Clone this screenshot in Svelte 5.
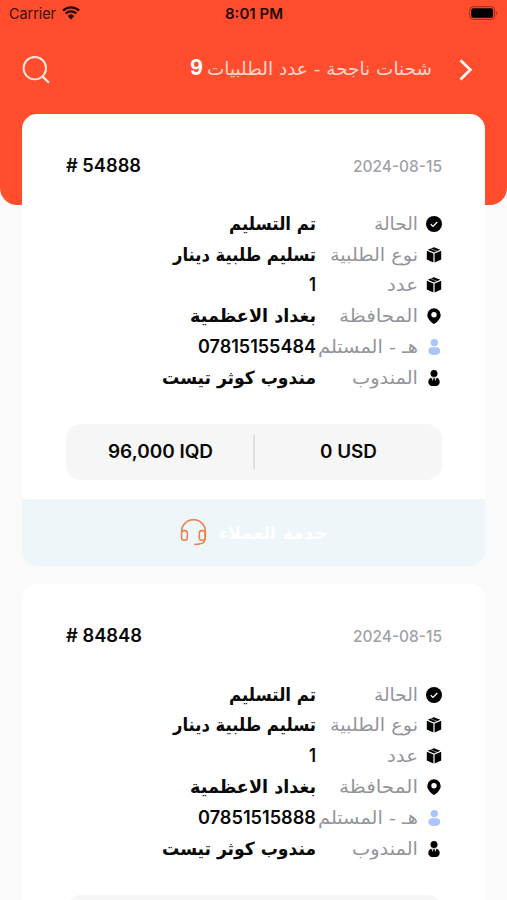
<script>
	const customerService = 'خدمة العملاء';

	// every text carries the width it takes up in the row
	const details = [
		{ icon: 'check', label: 'الحالة', labelWidth: 44 },
		{ icon: 'box', label: 'نوع الطلبية', labelWidth: 88 },
		{ icon: 'box', label: 'عدد', labelWidth: 31 },
		{ icon: 'pin', label: 'المحافظة', labelWidth: 79 },
		{ icon: 'user', label: 'هـ - المستلم', labelWidth: 100 },
		{ icon: 'agent', label: 'المندوب', labelWidth: 66 }
	];

	const orders = [
		{
			id: '54888',
			idWidth: 75,
			date: '2024-08-15',
			values: [
				['تم التسليم', 87],
				['تسليم طلبية دينار', 143],
				['1', 7],
				['بغداد الاعظمية', 126],
				['07815155484', 118],
				['مندوب كوثر تيست', 154]
			]
		},
		{
			id: '84848',
			idWidth: 76,
			date: '2024-08-15',
			values: [
				['تم التسليم', 87],
				['تسليم طلبية دينار', 143],
				['1', 7],
				['بغداد الاعظمية', 126],
				['07851515888', 118],
				['مندوب كوثر تيست', 154]
			]
		}
	];
</script>

{#snippet fit(text, width, kind)}
	<svg class="fit {kind}" {width} height="24">
		<text x={width / 2} y="17.5" text-anchor="middle" textLength={width} lengthAdjust="spacingAndGlyphs">{text}</text>
	</svg>
{/snippet}

{#snippet glyph(name)}
	<svg class="glyph" width="18" height="18" viewBox="0 0 18 18">
		{#if name === 'check'}
			<circle cx="9" cy="9" r="8" />
			<path d="M5.7 9.2l2.3 2.2 4.3-4.4" fill="none" stroke="#fff" stroke-width="1.3" />
		{:else if name === 'box'}
			<path d="M9 1.2l6.3 2.5L9 6.4 2.7 3.7z" />
			<path d="M1.8 4.8l6.6 2.7v9L1.8 13.6z" />
			<path d="M16.2 4.8L9.6 7.5v9l6.6-2.9z" />
			<path d="M5.6 2.6l6.7 2.8" fill="none" stroke="#fff" stroke-width="0.5" />
		{:else if name === 'pin'}
			<path
				fill-rule="evenodd"
				d="M9 1.2a6.7 6.7 0 0 0-6.7 6.7c0 3.7 3.3 6.7 6.7 9.1 3.4-2.4 6.7-5.4 6.7-9.1A6.7 6.7 0 0 0 9 1.2zm0 3.9a2.7 2.7 0 1 1 0 5.4 2.7 2.7 0 0 1 0-5.4z"
			/>
		{:else if name === 'user'}
			<g fill="#a9c5fb">
				<circle cx="9.3" cy="4.6" r="3.7" />
				<path d="M7 9.3h4.6c2.2 0 3.6 1.7 3.6 3.7 0 2.7-2.1 3.9-5.9 3.9s-5.9-1.2-5.9-3.9c0-2 1.4-3.7 3.6-3.7z" />
			</g>
		{:else}
			<circle cx="9" cy="4.5" r="3.5" />
			<path d="M7 8.8h4c2.3 0 3.7 1.7 3.7 4.2 0 2.4-1.6 3.9-3.7 3.9H7c-2.1 0-3.7-1.5-3.7-3.9 0-2.5 1.4-4.2 3.7-4.2z" />
			<path d="M6.2 8.8L9 14l2.8-5.2z" fill="#ddd" />
			<path d="M8.3 9.2h1.4l.6 4.5L9 15.4l-1.3-1.7z" />
		{/if}
	</svg>
{/snippet}

<div class="screen">
	<header>
		<div class="status">
			<div class="status__carrier">
				{@render fit('Carrier', 47, 'carrier')}
				<svg width="18" height="14" viewBox="0 0 18 14">
					<path d="M1 4.6a11.5 11.5 0 0 1 16 0M3.7 7.5a7.6 7.6 0 0 1 10.6 0" fill="none" stroke="#250700" stroke-width="2.3" />
					<path d="M5.7 9.9a4.8 4.8 0 0 1 6.6 0L9 13.4z" fill="#250700" />
				</svg>
			</div>
			{@render fit('8:01 PM', 58, 'clock')}
			<div class="status__battery">
				<svg width="30" height="14" viewBox="0 0 30 14">
					<rect x="0.7" y="0.7" width="25" height="12.6" rx="3.5" fill="none" stroke="#9c2e19" />
					<rect x="2.3" y="2.3" width="21.8" height="9.4" rx="2" />
					<path d="M27.2 4.9q2 2.1 0 4.2z" fill="#9c2e19" />
				</svg>
			</div>
		</div>
		<div class="bar">
			<svg width="28" height="28" viewBox="0 0 28 28" fill="none" stroke="#ffe9e2" stroke-width="1.9">
				<circle cx="12.8" cy="12.2" r="11.2" />
				<path d="M20.4 20.4l6.6 6.4" stroke-width="2.2" />
			</svg>
			<div class="bar__title">
				{@render fit('شحنات ناجحة - عدد الطلبيات', 225, 'title')}
				{@render fit('9', 13, 'count')}
			</div>
			<svg width="14" height="22" viewBox="0 0 14 22">
				<path d="M1.5 1.2L11.3 10.8 1.5 20.5" fill="none" stroke="#fff" stroke-width="2.7" />
			</svg>
		</div>
	</header>

	<main>
		{#each orders as order}
			<article class="card">
				<div class="card__body">
					<div class="card__top">
						{@render fit('# ' + order.id, order.idWidth, 'number')}
						{@render fit(order.date, 89, 'date')}
					</div>
					<div class="details">
						{#each details as detail, i}
							<div class="detail">
								{@render glyph(detail.icon)}
								<div class="detail__label">
									{@render fit(detail.label, detail.labelWidth, 'label')}
								</div>
								{@render fit(order.values[i][0], order.values[i][1], i === 2 || i === 4 ? 'number' : 'value')}
							</div>
						{/each}
					</div>
					<div class="totals">
						<div class="total">{@render fit('96,000 IQD', 105, 'number')}</div>
						<div class="total">{@render fit('0 USD', 57, 'number')}</div>
					</div>
				</div>
				<div class="card__support">
					<svg width="27" height="27" viewBox="0 0 27 27" fill="none" stroke="#ef8354" stroke-width="1.6">
						<path d="M1.6 14v-1.5a11.9 11.9 0 0 1 23.8 0V18c0 4.2-2.3 6.8-6.2 6.8" />
						<rect x="1.6" y="11.6" width="5.7" height="9.6" rx="2.4" />
						<rect x="19.3" y="11.6" width="5.7" height="9.6" rx="2.4" />
						<path d="M20 24.5q-1.7 1.3-6 .8" />
					</svg>
					{@render fit(customerService, 108, 'support')}
				</div>
			</article>
		{/each}
	</main>
</div>

<style>
	:global(body) {
		background: #fafafa;
	}

	.screen {
		height: 900px;
		overflow: hidden;
		background: #fafafa;
	}

	svg {
		display: block;
		flex: none;
	}

	header {
		box-sizing: border-box;
		height: 205px;
		background: #ff4d2d;
		border-radius: 0 0 17px 17px;
	}

	.status {
		display: grid;
		grid-template-columns: 1fr auto 1fr;
		align-items: center;
		height: 26px;
		padding: 0 8px 0 9px;
	}

	.status__carrier {
		display: flex;
		align-items: center;
		gap: 6px;
	}

	.status__battery {
		display: flex;
		justify-content: flex-end;
	}

	.bar {
		display: flex;
		align-items: center;
		padding: 30px 34px 0 22px;
	}

	.bar__title {
		direction: rtl;
		display: flex;
		gap: 4px;
		margin: 0 27px 2px auto;
	}

	main {
		display: grid;
		gap: 18px;
		padding: 0 22px;
		margin-top: -91.5px;
	}

	.card {
		background: #fff;
		border-radius: 15px;
		overflow: hidden;
	}

	.card__body {
		padding: 40px 43px 19px 44px;
	}

	.card__top {
		display: flex;
		justify-content: space-between;
	}

	.details {
		display: grid;
		grid-auto-rows: 30.8px;
		direction: rtl;
		padding-top: 31px;
	}

	.detail {
		display: flex;
		align-items: center;
	}

	.glyph {
		margin-right: -1px;
	}

	.detail__label {
		width: 102px;
		margin-right: 7px;
	}

	/** Text **/
	.fit {
		overflow: visible;
		direction: rtl;
		font-family: 'DejaVu Sans', sans-serif;
	}

	.carrier,
	.clock,
	.count,
	.date,
	.number {
		direction: ltr;
		font-family: Inter, sans-serif;
	}

	.carrier {
		font-size: 15px;
		fill: #3d0c03;
	}

	.clock {
		font-size: 14.5px;
		font-weight: 600;
		fill: #250700;
	}

	.title {
		font-size: 18px;
		fill: #ffd9cf;
	}

	.count {
		font-size: 21px;
		font-weight: 700;
		fill: #fff;
	}

	.number {
		font-size: 18px;
		font-weight: 600;
		fill: #080808;
	}

	.date {
		font-size: 16px;
		font-weight: 500;
		fill: #a0a2a8;
	}

	.label {
		font-size: 18px;
		fill: #92959b;
	}

	.value {
		font-size: 18px;
		font-weight: 700;
		fill: #080808;
	}

	.support {
		font-size: 17px;
		font-weight: 700;
		fill: #fff;
	}

	.totals {
		display: grid;
		grid-template-columns: 1fr 1fr;
		align-items: center;
		height: 56px;
		margin-top: 31px;
		background: #f6f6f6;
		border-radius: 15px;
	}

	.total {
		display: flex;
		align-items: center;
		justify-content: center;
		height: 34px;
	}

	.total + .total {
		margin-left: -1px;
		border-left: 2px solid #dedfe1;
	}

	.card__support {
		display: flex;
		align-items: center;
		justify-content: center;
		gap: 12px;
		height: 67px;
		padding-right: 1px;
		background: #eef6f9;
	}
</style>
